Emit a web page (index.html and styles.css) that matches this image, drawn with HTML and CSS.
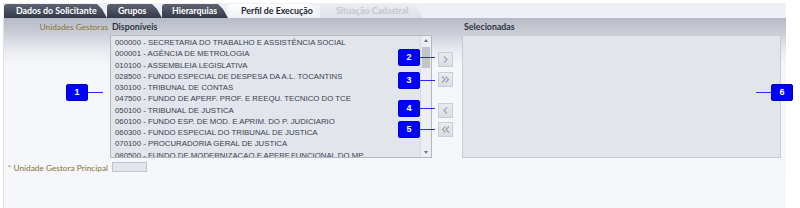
FILE: index.html
```html
<!DOCTYPE html>
<html lang="pt-BR">
<head>
    <meta charset="UTF-8">
    <title>Perfil de Execução</title>
    <link rel="stylesheet" href="styles.css">
</head>
<body>

<div class="page">
    <div class="tabbar">
        <div class="tab dark tab-dados">Dados do Solicitante</div>
        <div class="tab dark tab-grupos">Grupos</div>
        <div class="tab dark tab-hier">Hierarquias</div>
        <div class="tab active tab-perfil">Perfil de Execução</div>
        <div class="tab disabled tab-situacao">Situação Cadastral</div>
    </div>

    <div class="panel">
        <div class="form-grid">
            <!-- cabeçalhos -->
            <div class="label head-label">Unidades Gestoras</div>
            <div class="col-title">Disponíveis</div>
            <div></div>
            <div class="col-title">Selecionadas</div>

            <!-- listas -->
            <div></div>
            <div class="listbox">
                <div class="items">
                    <div class="item">000000 - SECRETARIA DO TRABALHO E ASSISTÊNCIA SOCIAL</div>
                    <div class="item">000001 - AGÊNCIA DE METROLOGIA</div>
                    <div class="item">010100 - ASSEMBLEIA LEGISLATIVA</div>
                    <div class="item">028500 - FUNDO ESPECIAL DE DESPESA DA A.L. TOCANTINS</div>
                    <div class="item">030100 - TRIBUNAL DE CONTAS</div>
                    <div class="item">047500 - FUNDO DE APERF. PROF. E REEQU. TECNICO DO TCE</div>
                    <div class="item">050100 - TRIBUNAL DE JUSTICA</div>
                    <div class="item">060100 - FUNDO ESP. DE MOD. E APRIM. DO P. JUDICIARIO</div>
                    <div class="item">060300 - FUNDO ESPECIAL DO TRIBUNAL DE JUSTICA</div>
                    <div class="item">070100 - PROCURADORIA GERAL DE JUSTICA</div>
                    <div class="item">080500 - FUNDO DE MODERNIZACAO E APERF.FUNCIONAL DO MP</div>
                </div>
                <div class="scrollbar">
                    <span class="arrow up"></span>
                    <span class="thumb"></span>
                    <span class="track"></span>
                    <span class="arrow down"></span>
                </div>
            </div>
            <div class="moves">
                <button class="move add">
                    <svg width="9" height="9" viewBox="0 0 9 9"><polyline points="3,1.5 6,4.5 3,7.5"/></svg>
                </button>
                <button class="move add-all">
                    <svg width="11" height="9" viewBox="0 0 11 9"><polyline points="2,1.5 5,4.5 2,7.5"/><polyline points="5.5,1.5 8.5,4.5 5.5,7.5"/></svg>
                </button>
                <button class="move remove">
                    <svg width="9" height="9" viewBox="0 0 9 9"><polyline points="6,1.5 3,4.5 6,7.5"/></svg>
                </button>
                <button class="move remove-all">
                    <svg width="11" height="9" viewBox="0 0 11 9"><polyline points="5.5,1.5 2.5,4.5 5.5,7.5"/><polyline points="9,1.5 6,4.5 9,7.5"/></svg>
                </button>
            </div>
            <div class="selected-box"></div>

            <!-- principal -->
            <div class="label principal-label"><span class="req">*</span> Unidade Gestora Principal</div>
            <div class="principal-field"><input type="text" class="principal-input"></div>
        </div>
    </div>

    <!-- marcadores -->
    <div class="callout c1"><span class="num">1</span><span class="line"></span></div>
    <div class="callout c2"><span class="num">2</span><span class="line"></span></div>
    <div class="callout c3"><span class="num">3</span><span class="line"></span></div>
    <div class="callout c4"><span class="num">4</span><span class="line"></span></div>
    <div class="callout c5"><span class="num">5</span><span class="line"></span></div>
    <div class="callout c6 left"><span class="line"></span><span class="num">6</span></div>
</div>

</body>
</html>
```

FILE: styles.css
```css
body {
    margin: 0;
    background-color: #fff;
    font-family: Lato, "Liberation Sans", Arial, sans-serif;
    overflow: hidden;
}
.page {
    position: relative;
    width: 783px;
    height: 205px;
    margin: 3px 0 0 3px;
}

/* Abas */
.tabbar {
    display: flex;
    align-items: flex-end;
    height: 15px;
    padding-left: 1px;
    background-color: #eef0f5;
}
.tab {
    box-sizing: border-box;
    height: 14px;
    line-height: 14px;
    font-size: 8.8px;
    font-weight: bold;
    white-space: nowrap;
    margin-right: -1px;
    border-radius: 3px 0 0 0;
    clip-path: polygon(0 0, calc(100% - 11px) 0, calc(100% - 6px) 35%, calc(100% - 1px) 100%, 0 100%);
}
.tab-dados { width: 104px; padding-left: 12px; }
.tab-grupos { width: 56px; padding-left: 11px; }
.tab-hier { width: 67px; padding-left: 10px; }
.tab-perfil { width: 93px; padding-left: 13px; }
.tab-situacao { width: 104px; padding-left: 16px; }
.tab.dark {
    background: linear-gradient(#5d6373, #343a48);
    color: #fff;
}
.tab.active {
    background: linear-gradient(#ffffff, #eef0f4);
    color: #1f2633;
}
.tab.disabled {
    background: linear-gradient(#eaecf1, #dfe2e8);
    color: #c2c6ce;
}

/* Painel */
.panel {
    height: 190px;
    border-left: 1px solid #dde0e7;
    background: linear-gradient(#b6bac6 0, #c9ccd5 14px, #e8eaef 32px, #f5f6f9 46px, #f6f7fa 100%);
}
.form-grid {
    display: grid;
    grid-template-columns: 106px 322px 30px 319px;
    grid-template-rows: 17px 123px auto;
}
.label {
    text-align: right;
    padding-right: 2px;
    font-size: 8.3px;
    color: #8a7034;
    white-space: nowrap;
}
.head-label {
    align-self: end;
    padding-bottom: 3px;
}
.col-title {
    align-self: end;
    padding: 0 0 3px 2px;
    font-size: 8.8px;
    font-weight: bold;
    color: #2e3440;
}

/* Lista de disponíveis */
.listbox {
    display: flex;
    border: 1px solid #b4b8c1;
    background-color: #e2e5ec;
    overflow: hidden;
}
.items {
    flex: 1;
    padding: 1px 0 0 4px;
    overflow: hidden;
}
.item {
    font-family: "Liberation Sans", Arial, sans-serif;
    font-size: 7.8px;
    line-height: 11.27px;
    color: #3b404c;
    white-space: nowrap;
}
.scrollbar {
    width: 10px;
    display: flex;
    flex-direction: column;
    align-items: center;
    background-color: #eceef2;
    border-left: 1px solid #d6d9e0;
}
.arrow {
    width: 0;
    height: 0;
    border-left: 2.5px solid transparent;
    border-right: 2.5px solid transparent;
    margin: 3px 0;
}
.arrow.up {
    border-bottom: 3px solid #6b6f78;
}
.arrow.down {
    border-top: 3px solid #6b6f78;
}
.thumb {
    width: 8px;
    height: 21px;
    margin-top: 2px;
    background-color: #c3c5ca;
}
.track {
    flex: 1;
}

/* Botões de mover */
.moves {
    display: flex;
    flex-direction: column;
    padding: 17px 0 0 6px;
}
.move {
    width: 15px;
    height: 15px;
    padding: 0;
    display: flex;
    align-items: center;
    justify-content: center;
    border: 1px solid #c9cdd5;
    background: linear-gradient(#e9ebef, #dadde3);
}
.move svg polyline {
    fill: none;
    stroke: #a2a6ae;
    stroke-width: 1.3;
}
.move.add-all {
    margin-top: 5px;
}
.move.remove {
    margin-top: 16px;
}
.move.remove-all {
    margin-top: 4px;
}

/* Lista de selecionadas */
.selected-box {
    border: 1px solid #c9ccd4;
    background-color: #e2e5ec;
}

/* Unidade principal */
.principal-label {
    grid-column: 1;
    padding-top: 5px;
}
.req {
    color: #b59a55;
}
.principal-field {
    padding: 4px 0 0 2px;
}
.principal-input {
    display: block;
    width: 35px;
    height: 10px;
    box-sizing: border-box;
    padding: 0;
    border: 1px solid #c0c4cc;
    background-color: #e2e5ec;
}

/* Marcadores numerados */
.callout {
    position: absolute;
    display: flex;
    align-items: center;
}
.callout .num {
    width: 22px;
    height: 17px;
    box-sizing: border-box;
    border: 1px solid #0000c8;
    border-radius: 2px;
    background-color: #0000ff;
    color: #fff;
    font-family: "Liberation Sans", Arial, sans-serif;
    font-size: 9px;
    font-weight: bold;
    line-height: 15px;
    text-align: center;
}
.callout .line {
    width: 15px;
    height: 1px;
    background-color: #2a2aff;
}
.c1 { left: 63px; top: 81px; }
.c2 { left: 395px; top: 46px; }
.c3 { left: 395px; top: 69px; }
.c4 { left: 395px; top: 97px; }
.c5 { left: 395px; top: 118px; }
.c6 { left: 753px; top: 81px; }
```
